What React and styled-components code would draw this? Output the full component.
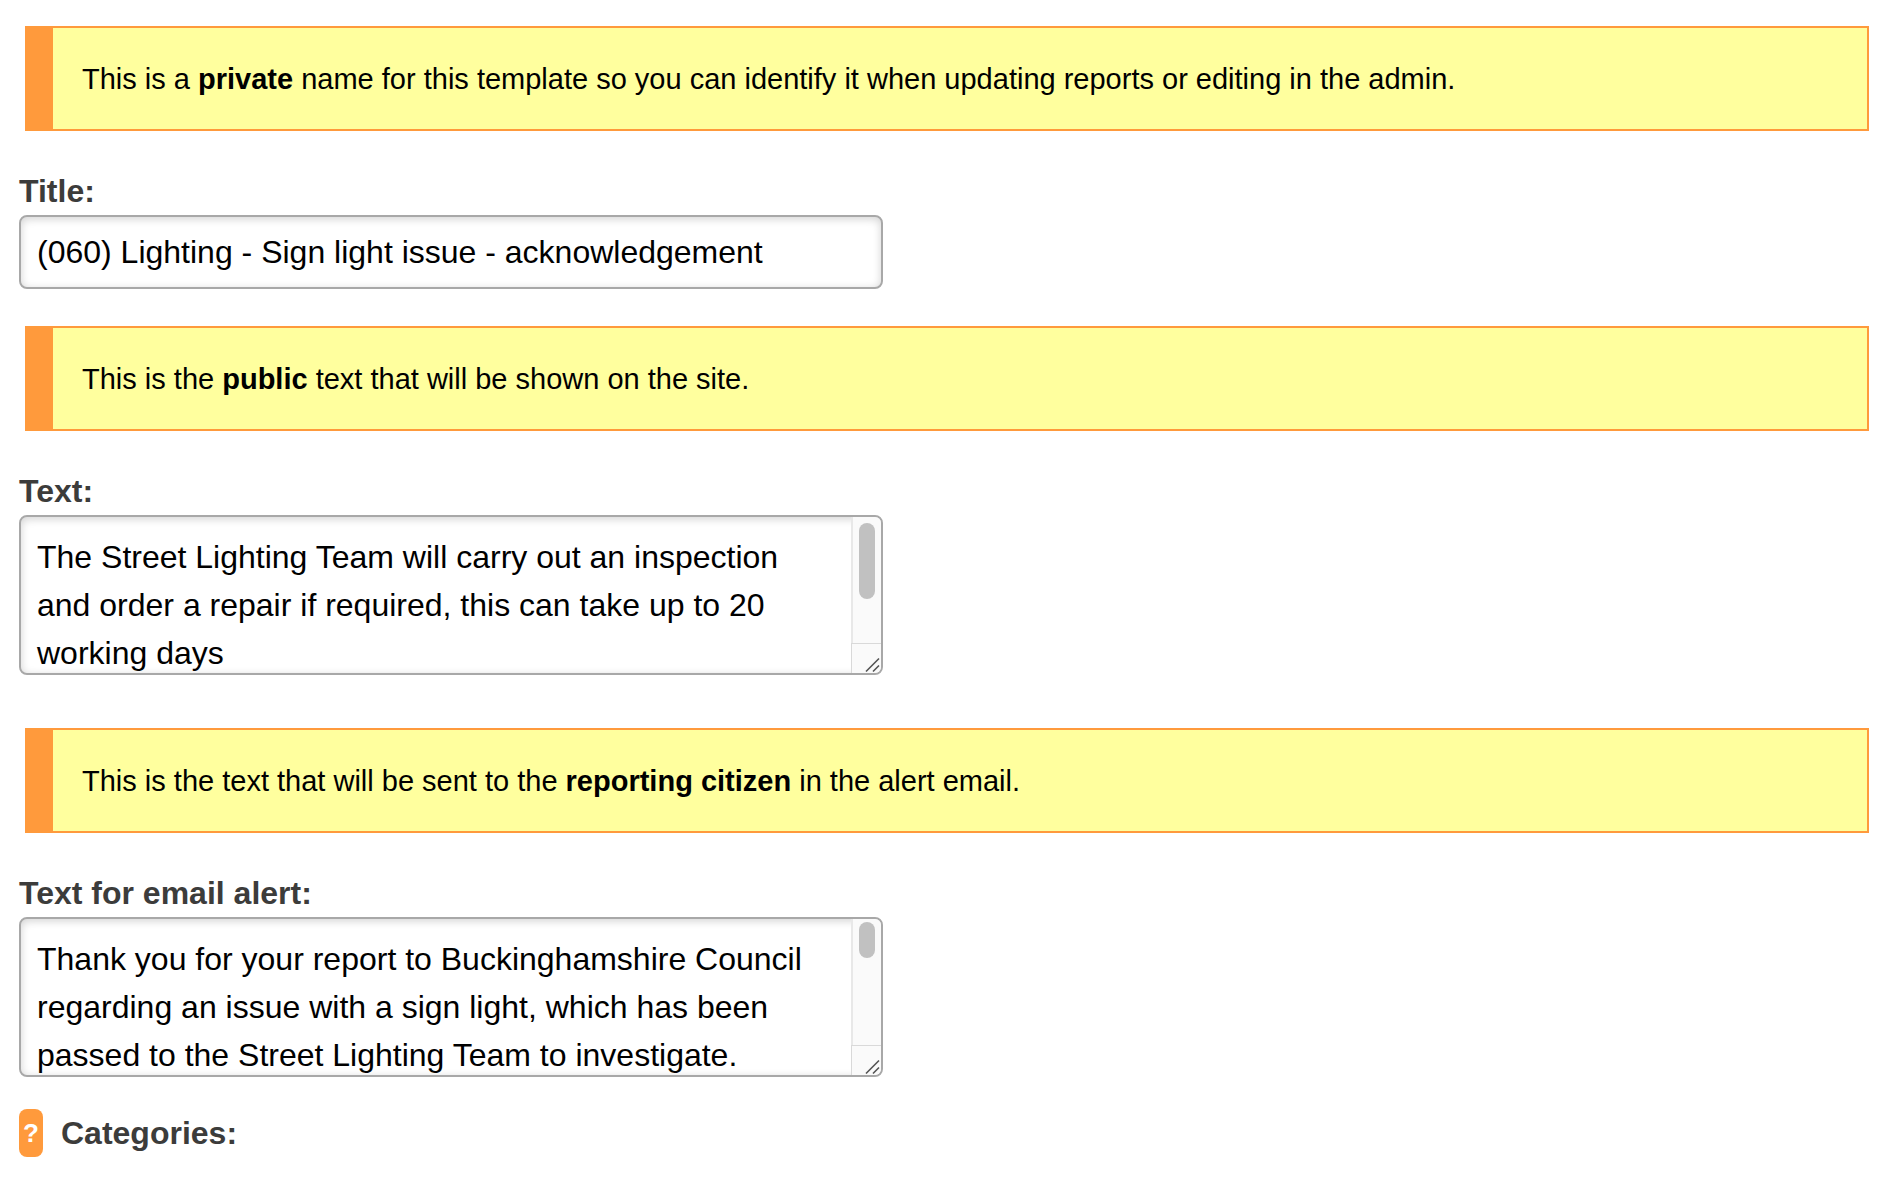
import React from "react";
import styled, { createGlobalStyle, css } from "styled-components";

const GlobalStyle = createGlobalStyle`
  body {
    margin: 0;
    background: #fff;
    color: #000;
    font-family: "Helvetica Neue", "Liberation Sans", Arial, sans-serif;
    font-size: 32px;
    line-height: 48px;
  }
`;

const Form = styled.form`
  display: flex;
  flex-direction: column;
  padding: 26px 29px 29px 19px;
`;

const Hint = styled.p`
  box-sizing: border-box;
  margin: 0 0 36px 6px;
  padding: 30px 29px 29px;
  border: 2px solid #ff9a3c;
  border-left-width: 28px;
  background: #ffff9e;
  font-size: 29px;
  line-height: 42px;
`;

const Field = styled.div`
  display: flex;
  flex-direction: column;
  margin-bottom: ${(p) => p.$gap}px;
`;

const Label = styled.label`
  color: #3c3c3b;
  font-weight: bold;
`;

const control = css`
  box-sizing: border-box;
  display: block;
  width: 100%;
  margin: 0;
  border: 2px solid #a8a8a8;
  border-radius: 8px;
  outline: none;
  background: #fff;
  box-shadow: inset 0 2px 8px rgba(0, 0, 0, 0.18);
  color: #000;
  font: inherit;
`;

const TextInput = styled.input`
  ${control}
  max-width: 864px;
  padding: 11px 16px;
`;

const TextAreaFrame = styled.div`
  position: relative;
  max-width: 864px;
`;

const TextArea = styled.textarea`
  ${control}
  height: 160px;
  padding: 16px 46px 16px 16px;
  resize: none;
  scrollbar-width: none;
`;

const ScrollRail = styled.div`
  position: absolute;
  top: 2px;
  right: 2px;
  bottom: 2px;
  box-sizing: border-box;
  display: flex;
  flex-direction: column;
  width: 30px;
  border-radius: 0 6px 6px 0;
  background: #fafafa;
  overflow: hidden;
  pointer-events: none;
`;

const ScrollTrack = styled.div`
  flex: 1;
  padding: ${(p) => p.$inset}px 6px 0;
  border-left: 2px solid #e8e8e8;
`;

const ScrollThumb = styled.div`
  width: 16px;
  height: ${(p) => p.$length}px;
  border-radius: 8px;
  background: #c1c1c1;
`;

const ResizeGrip = styled.svg`
  display: block;
  box-sizing: border-box;
  width: 30px;
  height: 30px;
  border-top: 1px solid #d9d9d9;
  border-left: 1px solid #d9d9d9;
  fill: none;
  stroke: #555;
  stroke-width: 1.6;
`;

const CategoryRow = styled.div`
  display: flex;
  align-items: center;
  gap: 18px;
`;

const HelpButton = styled.button`
  width: 24px;
  height: 48px;
  padding: 0;
  border: 0;
  border-radius: 8px;
  background: #ff9a3c;
  color: #fff;
  font: bold 26px/48px "Helvetica Neue", "Liberation Sans", Arial, sans-serif;
  text-align: center;
`;

const CategoryHeading = styled.span`
  color: #3c3c3b;
  font-weight: bold;
`;

function ScrollingTextArea({ id, value, thumbInset, thumbLength }) {
  return (
    <TextAreaFrame>
      <TextArea id={id} spellCheck={false} defaultValue={value} />
      <ScrollRail aria-hidden="true">
        <ScrollTrack $inset={thumbInset}>
          <ScrollThumb $length={thumbLength} />
        </ScrollTrack>
        <ResizeGrip viewBox="0 0 29 29">
          <path d="M14 27.5L27 14.5M21 27.5L27 21.5" />
        </ResizeGrip>
      </ScrollRail>
    </TextAreaFrame>
  );
}

const publicText =
  "The Street Lighting Team will carry out an inspection and order a repair if required, this can take up to 20 working days";
const emailText =
  "Thank you for your report to Buckinghamshire Council regarding an issue with a sign light, which has been passed to the Street Lighting Team to investigate.";

export default function App() {
  return (
    <>
      <GlobalStyle />
      <Form>
        <Hint>
          This is a <strong>private</strong> name for this template so you can
          identify it when updating reports or editing in the admin.
        </Hint>
        <Field $gap={37}>
          <Label htmlFor="title">Title:</Label>
          <TextInput
            id="title"
            type="text"
            defaultValue="(060) Lighting - Sign light issue - acknowledgement"
          />
        </Field>
        <Hint>
          This is the <strong>public</strong> text that will be shown on the
          site.
        </Hint>
        <Field $gap={53}>
          <Label htmlFor="text">Text:</Label>
          <ScrollingTextArea
            id="text"
            value={publicText}
            thumbInset={6}
            thumbLength={76}
          />
        </Field>
        <Hint>
          This is the text that will be sent to the{" "}
          <strong>reporting citizen</strong> in the alert email.
        </Hint>
        <Field $gap={32}>
          <Label htmlFor="email-text">Text for email alert:</Label>
          <ScrollingTextArea
            id="email-text"
            value={emailText}
            thumbInset={3}
            thumbLength={36}
          />
        </Field>
        <CategoryRow>
          <HelpButton type="button" aria-labelledby="categories">
            ?
          </HelpButton>
          <CategoryHeading id="categories">Categories:</CategoryHeading>
        </CategoryRow>
      </Form>
    </>
  );
}
